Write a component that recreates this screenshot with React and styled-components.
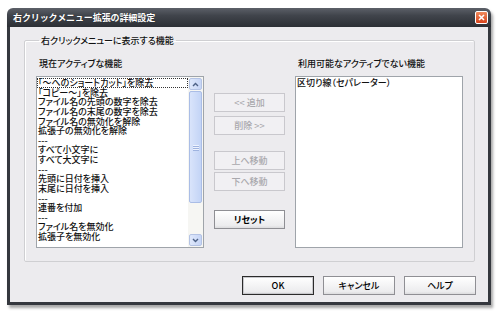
import React from "react";
import styled, { createGlobalStyle } from "styled-components";

const Global = createGlobalStyle`
  html, body { margin: 0; padding: 0; background: #ffffff; }
  body { font-family: "Noto Sans CJK JP", "Noto Sans", sans-serif; }
`;

const Page = styled.div`
  padding: 8px 0 0 7px;
  width: 500px;
  height: 317px;
  box-sizing: border-box;
`;

const Window = styled.div`
  width: 484px;
  height: 297px;
  display: flex;
  flex-direction: column;
  border-radius: 6px 6px 0 0;
  box-shadow: 2px 3px 3px rgba(0, 0, 0, 0.35);
`;

const TitleBar = styled.div`
  height: 19px;
  flex: none;
  display: flex;
  align-items: center;
  justify-content: space-between;
  padding: 0 3px 0 6px;
  border-radius: 6px 6px 0 0;
  background: linear-gradient(#5c6068 0%, #40444b 40%, #2c2f35 100%);
`;

const Title = styled.span`
  color: #ffffff;
  font-size: 9px;
  font-weight: 700;
  line-height: 1;
  letter-spacing: -0.1px;
  text-shadow: 0 0 1px rgba(0,0,0,0.5);
`;

const CloseBox = styled.div`
  width: 13px;
  height: 13px;
  border-radius: 2px;
  background: linear-gradient(#f08a5c, #d8431c);
  border: 1px solid #ffffff;
  box-sizing: border-box;
  display: flex;
  align-items: center;
  justify-content: center;
`;

const Body = styled.div`
  flex: 1;
  display: flex;
  flex-direction: column;
  background: #ecebee;
  border: 3px solid #35383e;
  border-top: none;
  padding: 8px 12px 7px 14px;
  font-feature-settings: "palt";
  font-weight: 500;
  color: #111;
`;

const Group = styled.fieldset`
  margin: 0 1px 0 0;
  padding: 5px 11px 13px 11px;
  min-width: 0;
  border: 1px solid #cfcfd2;
  box-shadow: inset 1px 1px 0 #ffffff;
  border-radius: 2px;
  display: flex;
  gap: 10px;
`;

const Legend = styled.legend`
  font-size: 9px;
  line-height: 11px;
  padding: 0 2px;
  margin-left: 3px;
`;

const Column = styled.div`
  display: flex;
  flex-direction: column;
  width: ${(p) => p.$w}px;
`;

const Label = styled.div`
  font-size: 9px;
  line-height: 11px;
  height: 11px;
  padding-left: 3px;
  margin-bottom: 7px;
  margin-top: 7px;
`;

const ListBox = styled.div`
  height: 172px;
  box-sizing: border-box;
  border: 1px solid #9fa4aa;
  background: #ffffff;
  display: flex;
  overflow: hidden;
`;

const Items = styled.div`
  flex: 1;
  padding: 1px 0 0;
  font-size: 9px;
  line-height: 9.63px;
  overflow: hidden;
`;

const Item = styled.div`
  height: 9.63px;
  padding-left: 1px;
  white-space: nowrap;
  box-sizing: border-box;
  outline: ${(p) => (p.$focus ? "1px dotted #333" : "none")};
  outline-offset: -1px;
`;

const ScrollBar = styled.div`
  width: 15px;
  flex: none;
  display: flex;
  flex-direction: column;
  background: #f6f6f3;
  padding: 1px 0;
  box-sizing: border-box;
`;

const Arrow = styled.div`
  height: 12px;
  flex: none;
  margin: 0 1px;
  border: 1px solid #b4c3e4;
  border-radius: 2px;
  background: linear-gradient(90deg, #dfe8fb, #c6d5f6);
  display: flex;
  align-items: center;
  justify-content: center;
  box-sizing: border-box;
`;

const Track = styled.div`
  flex: 1;
  display: flex;
  flex-direction: column;
  padding: 1px 1px 0;
`;

const Thumb = styled.div`
  height: 110px;
  border: 1px solid #aabde6;
  border-radius: 2px;
  background: linear-gradient(90deg, #d9e4fb, #c3d4f6);
  display: flex;
  flex-direction: column;
  align-items: center;
  justify-content: center;
  gap: 1px;
`;

const Grip = styled.div`
  width: 6px;
  height: 1px;
  background: #eef3fe;
  box-shadow: 0 1px 0 #9eb3e0;
`;

const ButtonCol = styled.div`
  width: 71px;
  display: flex;
  flex-direction: column;
  padding-top: 42px;
`;

const Btn = styled.div`
  height: 19px;
  box-sizing: border-box;
  margin-top: ${(p) => p.$mt || 0}px;
  border: 1px solid ${(p) => (p.$disabled ? "#c9c8cd" : p.$default ? "#2b2b2b" : "#8f8f94")};
  box-shadow: ${(p) => (p.$default ? "inset 0 0 0 1px #c8c8cc" : "none")};
  background: ${(p) => (p.$disabled ? "#f1f0f3" : "linear-gradient(#ffffff, #ececee 85%, #dcdcde)")};
  color: ${(p) => (p.$disabled ? "#a9a8ad" : "#000")};
  font-size: 9px;
  display: flex;
  align-items: center;
  justify-content: center;
  line-height: 1;
  font-weight: ${(p) => (p.$bold ? 700 : 500)};
`;

const Footer = styled.div`
  display: flex;
  justify-content: flex-end;
  gap: 9px;
  margin-top: 14px;
  & > * { width: 72px; }
`;

const activeItems = [
  "「～へのショートカット」を除去",
  "「コピー～」を除去",
  "ファイル名の先頭の数字を除去",
  "ファイル名の末尾の数字を除去",
  "ファイル名の無効化を解除",
  "拡張子の無効化を解除",
  "---",
  "すべて小文字に",
  "すべて大文字に",
  "---",
  "先頭に日付を挿入",
  "末尾に日付を挿入",
  "---",
  "連番を付加",
  "---",
  "ファイル名を無効化",
  "拡張子を無効化",
  "---",
];

const Chevron = ({ up }) => (
  <svg width="7" height="5" viewBox="0 0 7 5">
    <path
      d={up ? "M1 4 L3.5 1.5 L6 4" : "M1 1 L3.5 3.5 L6 1"}
      fill="none"
      stroke="#4d6185"
      strokeWidth="1.4"
    />
  </svg>
);

export default function App() {
  return (
    <Page>
      <Global />
      <Window>
        <TitleBar>
          <Title>右クリックメニュー拡張の詳細設定</Title>
          <CloseBox>
            <svg width="7" height="7" viewBox="0 0 7 7">
              <path d="M1 1 L6 6 M6 1 L1 6" stroke="#fff" strokeWidth="1.6" />
            </svg>
          </CloseBox>
        </TitleBar>
        <Body>
          <Group>
            <Legend>右クリックメニューに表示する機能</Legend>
            <Column $w={168}>
              <Label>現在アクティブな機能</Label>
              <ListBox>
                <Items>
                  {activeItems.map((t, i) => (
                    <Item key={i} $focus={i === 0}>{t}</Item>
                  ))}
                </Items>
                <ScrollBar>
                  <Arrow><Chevron up /></Arrow>
                  <Track>
                    <Thumb>
                      <Grip /><Grip /><Grip />
                    </Thumb>
                  </Track>
                  <Arrow><Chevron /></Arrow>
                </ScrollBar>
              </ListBox>
            </Column>
            <ButtonCol>
              <Btn $disabled>&lt;&lt; 追加</Btn>
              <Btn $disabled $mt={4}>削除 &gt;&gt;</Btn>
              <Btn $disabled $mt={16}>上へ移動</Btn>
              <Btn $disabled $mt={2}>下へ移動</Btn>
              <Btn $mt={19} $bold>リセット</Btn>
            </ButtonCol>
            <Column $w={168}>
              <Label>利用可能なアクティブでない機能</Label>
              <ListBox>
                <Items>
                  <Item>区切り線（セパレーター）</Item>
                </Items>
              </ListBox>
            </Column>
          </Group>
          <Footer>
            <Btn $default>OK</Btn>
            <Btn>キャンセル</Btn>
            <Btn>ヘルプ</Btn>
          </Footer>
        </Body>
      </Window>
    </Page>
  );
}
